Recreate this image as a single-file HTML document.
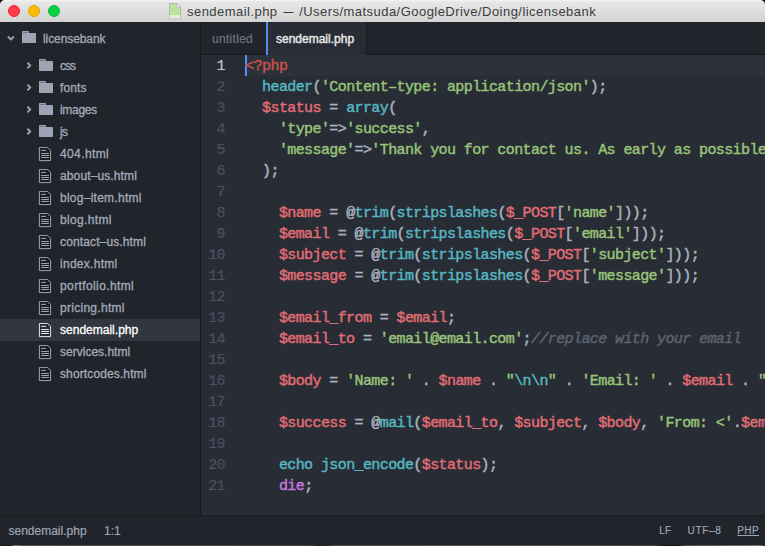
<!DOCTYPE html>
<html>
<head>
<meta charset="utf-8">
<title>sendemail.php</title>
<style>
*{box-sizing:border-box;margin:0;padding:0}
html,body{width:765px;height:546px;overflow:hidden;background:#282c34}
body{font-family:"Liberation Sans",sans-serif;position:relative}
#win{position:absolute;left:0;top:0;width:765px;height:546px;overflow:hidden;background:#282c34}
/* title bar */
#title{position:absolute;left:0;top:0;width:765px;height:22px;background:linear-gradient(#f5f5f5 0,#e7e7e7 2px,#d3d3d3 100%)}
#title .dot{position:absolute;top:5px;width:12px;height:12px;border-radius:50%}
#d1{left:8px;background:#fc3d49;border:1px solid #ee2430}
#d2{left:28px;background:#fdbc08;border:1px solid #e0a20a}
#d3{left:48px;background:#05d145;border:1px solid #0ab83b}
#ttext{position:absolute;left:187px;top:3.500px;font-size:13px;line-height:16px;color:#3c3c3c;white-space:nowrap;letter-spacing:.46px}
#corner,#corner2{position:absolute;top:0;width:4px;height:4px}
#corner{left:0;background:radial-gradient(circle at 4px 4px,rgba(0,0,0,0) 3.300px,#000 4.300px)}
#corner2{right:0;background:radial-gradient(circle at 0 4px,rgba(0,0,0,0) 3.300px,#000 4.300px)}
#ficon{position:absolute;left:169px;top:2.700px}
/* sidebar */
#side{position:absolute;left:0;top:22px;width:201px;height:494px;background:#21252b;border-right:1px solid #181a1f}
.row{position:absolute;left:0;width:200px;height:22px;font-size:12px;line-height:22px;color:#a3abba;white-space:nowrap;-webkit-text-stroke:.3px}
.row span{position:absolute;top:0}
.row svg{position:absolute}
.sel{background:#31363f;color:#fff}
/* tabs */
#tabs{position:absolute;left:201px;top:22px;width:564px;height:33px;background:#21252b;border-bottom:1px solid #181a1f}
.tab{position:absolute;top:0;height:33px;font-size:12px;line-height:35px;color:#6e7482;-webkit-text-stroke:.2px;white-space:nowrap}
#t1{left:0;width:65px;padding-left:11px;letter-spacing:.3px}
#t2{left:65px;width:101px;background:#282c34;color:#e6e6e6;border-left:2px solid #568af2;border-right:1px solid #181a1f;padding-left:8px;height:33px;-webkit-text-stroke:.45px}
/* editor */
#ed{position:absolute;left:201px;top:55px;width:564px;height:461px;background:#282c34;font-family:"Liberation Mono",monospace;font-size:15px;letter-spacing:-.6px;-webkit-text-stroke:.45px}
#hl{position:absolute;left:44px;top:0;width:520px;height:21px;background:#2c313a}
#cur{position:absolute;left:44px;top:0;width:2px;height:21px;background:#528bff}
.ln{position:absolute;left:0;width:24px;text-align:right;height:21px;line-height:23px;color:#4b5263;white-space:pre}
.ln{-webkit-text-stroke:.15px}
.ln1{color:#c8ccd4}
.l{position:absolute;left:44.300px;height:21px;line-height:23px;color:#abb2bf;white-space:pre}
.d{color:#c8524b}.r{color:#e06c75}.g{color:#98c379}.c{color:#56b6c2}.b{color:#61afef}.p{color:#c678dd}.m{color:#5c6370;font-style:italic}.w{color:#abb2bf}
/* status */
#status{position:absolute;left:0;top:515px;width:765px;height:31px;background:#21252b;border-top:1px solid #181a1f;font-size:12px;line-height:30px;color:#9da5b4;-webkit-text-stroke:.2px}
#status span{position:absolute;top:0;white-space:nowrap}
#status .sm{font-size:10px;top:-.5px}
#bstrip{position:absolute;left:0;top:545px;width:765px;height:1px;background:linear-gradient(90deg,#16181c 0,#16181c 12px,#857f6e 13px,#857f6e 19px,#55565a 21px,#48494c 310px,#222 318px,#222 326px,#505154 334px,#58585a 520px,#4a4a4c 655px,#111 662px,#111 678px,#5a5a5c 686px,#77777a 750px,#8a8a8c 760px,#222 765px);opacity:.85}
</style>
</head>
<body>
<div id="win">
<div id="title">
  <div id="corner"></div><div id="corner2"></div>
  <div class="dot" id="d1"></div><div class="dot" id="d2"></div><div class="dot" id="d3"></div>
  <svg id="ficon" width="12" height="16" viewBox="0 0 12 16"><path d="M.4 .4h7.400l3.800 3.800v11.400h-11.200z" fill="#bbe39e" stroke="#8f9a8a" stroke-width=".6"/><path d="M.7 12.400h10.600v2.900h-10.600z" fill="#f7f7f7"/><path d="M.7 13.700h10.600" stroke="#c9c9c9" stroke-width=".5"/><path d="M7.800 .4v3.800h3.800z" fill="#fafafa" stroke="#a5a5a5" stroke-width=".5"/></svg>
  <div id="ttext">sendemail.php <span style="display:inline-block;transform:scaleX(.76)">—</span> /Users/matsuda/GoogleDrive/Doing/licensebank</div>
</div>

<div id="side">
<div class="row" style="top:6px"><svg style="left:6px;top:7px" width="10" height="7" viewBox="0 0 10 7"><path d="M1.900 1.500l3 3l3-3" fill="none" stroke="#9da5b4" stroke-width="1.900"/></svg><svg style="left:22px;top:3px" width="14" height="12" viewBox="0 0 14 12"><path d="M0 .800q0-.800 .800-.800h5.400q.800 0 .800 .800v1.300h6.200q.800 0 .800 .800v8.300q0 .800-.800 .800h-12.400q-.800 0-.800-.800z" fill="#9da5b4"/><rect x=".900" y="1.200" width="5.200" height=".800" fill="#666c79"/></svg><span style="left:43px;letter-spacing:-0.09px">licensebank</span></div>
<div class="row" style="top:33px"><svg style="left:26px;top:6px" width="7" height="9" viewBox="0 0 7 9"><path d="M1.400 1.700l2.800 2.800l-2.800 2.800" fill="none" stroke="#9da5b4" stroke-width="1.900"/></svg><svg style="left:39px;top:4px" width="14" height="12" viewBox="0 0 14 12"><path d="M0 .800q0-.800 .800-.800h5.400q.800 0 .800 .800v1.300h6.200q.800 0 .800 .800v8.300q0 .800-.800 .800h-12.400q-.800 0-.800-.800z" fill="#9da5b4"/><rect x=".900" y="1.200" width="5.200" height=".800" fill="#666c79"/></svg><span style="left:60px;letter-spacing:-0.95px">css</span></div>
<div class="row" style="top:55px"><svg style="left:26px;top:6px" width="7" height="9" viewBox="0 0 7 9"><path d="M1.400 1.700l2.800 2.800l-2.800 2.800" fill="none" stroke="#9da5b4" stroke-width="1.900"/></svg><svg style="left:39px;top:4px" width="14" height="12" viewBox="0 0 14 12"><path d="M0 .800q0-.800 .800-.800h5.400q.800 0 .800 .800v1.300h6.200q.800 0 .800 .800v8.300q0 .800-.800 .800h-12.400q-.800 0-.800-.800z" fill="#9da5b4"/><rect x=".900" y="1.200" width="5.200" height=".800" fill="#666c79"/></svg><span style="left:60px;letter-spacing:0.12px">fonts</span></div>
<div class="row" style="top:77px"><svg style="left:26px;top:6px" width="7" height="9" viewBox="0 0 7 9"><path d="M1.400 1.700l2.800 2.800l-2.800 2.800" fill="none" stroke="#9da5b4" stroke-width="1.900"/></svg><svg style="left:39px;top:4px" width="14" height="12" viewBox="0 0 14 12"><path d="M0 .800q0-.800 .800-.800h5.400q.800 0 .800 .800v1.300h6.200q.800 0 .800 .800v8.300q0 .800-.800 .800h-12.400q-.800 0-.800-.800z" fill="#9da5b4"/><rect x=".900" y="1.200" width="5.200" height=".800" fill="#666c79"/></svg><span style="left:60px;letter-spacing:-0.32px">images</span></div>
<div class="row" style="top:99px"><svg style="left:26px;top:6px" width="7" height="9" viewBox="0 0 7 9"><path d="M1.400 1.700l2.800 2.800l-2.800 2.800" fill="none" stroke="#9da5b4" stroke-width="1.900"/></svg><svg style="left:39px;top:4px" width="14" height="12" viewBox="0 0 14 12"><path d="M0 .800q0-.800 .800-.800h5.400q.800 0 .800 .800v1.300h6.200q.800 0 .800 .800v8.300q0 .800-.800 .800h-12.400q-.800 0-.800-.800z" fill="#9da5b4"/><rect x=".900" y="1.200" width="5.200" height=".800" fill="#666c79"/></svg><span style="left:60px;letter-spacing:-0.57px">js</span></div>
<div class="row" style="top:121px"><svg style="left:38px;top:4px" width="14" height="15" viewBox="0 0 14 15"><path d="M1.400 .4h8.200l3 3v10.200h-11.200z" fill="rgba(0,0,0,.13)" stroke="#9da5b4" stroke-width="1"/><path d="M3.200 3.400h4.700M3.200 6.500h7.700M3.200 8.500h7.700M3.200 10.500h7.700" stroke="#9da5b4" stroke-width="1"/></svg><span style="left:60px;letter-spacing:0.38px">404.html</span></div>
<div class="row" style="top:143px"><svg style="left:38px;top:4px" width="14" height="15" viewBox="0 0 14 15"><path d="M1.400 .4h8.200l3 3v10.200h-11.200z" fill="rgba(0,0,0,.13)" stroke="#9da5b4" stroke-width="1"/><path d="M3.200 3.400h4.700M3.200 6.500h7.700M3.200 8.500h7.700M3.200 10.500h7.700" stroke="#9da5b4" stroke-width="1"/></svg><span style="left:60px;letter-spacing:0.12px">about–us.html</span></div>
<div class="row" style="top:165px"><svg style="left:38px;top:4px" width="14" height="15" viewBox="0 0 14 15"><path d="M1.400 .4h8.200l3 3v10.200h-11.200z" fill="rgba(0,0,0,.13)" stroke="#9da5b4" stroke-width="1"/><path d="M3.200 3.400h4.700M3.200 6.500h7.700M3.200 8.500h7.700M3.200 10.500h7.700" stroke="#9da5b4" stroke-width="1"/></svg><span style="left:60px;letter-spacing:0.26px">blog–item.html</span></div>
<div class="row" style="top:187px"><svg style="left:38px;top:4px" width="14" height="15" viewBox="0 0 14 15"><path d="M1.400 .4h8.200l3 3v10.200h-11.200z" fill="rgba(0,0,0,.13)" stroke="#9da5b4" stroke-width="1"/><path d="M3.200 3.400h4.700M3.200 6.500h7.700M3.200 8.500h7.700M3.200 10.500h7.700" stroke="#9da5b4" stroke-width="1"/></svg><span style="left:60px;letter-spacing:0.34px">blog.html</span></div>
<div class="row" style="top:209px"><svg style="left:38px;top:4px" width="14" height="15" viewBox="0 0 14 15"><path d="M1.400 .4h8.200l3 3v10.200h-11.200z" fill="rgba(0,0,0,.13)" stroke="#9da5b4" stroke-width="1"/><path d="M3.200 3.400h4.700M3.200 6.500h7.700M3.200 8.500h7.700M3.200 10.500h7.700" stroke="#9da5b4" stroke-width="1"/></svg><span style="left:60px;letter-spacing:0.13px">contact–us.html</span></div>
<div class="row" style="top:231px"><svg style="left:38px;top:4px" width="14" height="15" viewBox="0 0 14 15"><path d="M1.400 .4h8.200l3 3v10.200h-11.200z" fill="rgba(0,0,0,.13)" stroke="#9da5b4" stroke-width="1"/><path d="M3.200 3.400h4.700M3.200 6.500h7.700M3.200 8.500h7.700M3.200 10.500h7.700" stroke="#9da5b4" stroke-width="1"/></svg><span style="left:60px;letter-spacing:0.28px">index.html</span></div>
<div class="row" style="top:253px"><svg style="left:38px;top:4px" width="14" height="15" viewBox="0 0 14 15"><path d="M1.400 .4h8.200l3 3v10.200h-11.200z" fill="rgba(0,0,0,.13)" stroke="#9da5b4" stroke-width="1"/><path d="M3.200 3.400h4.700M3.200 6.500h7.700M3.200 8.500h7.700M3.200 10.500h7.700" stroke="#9da5b4" stroke-width="1"/></svg><span style="left:60px;letter-spacing:0.39px">portfolio.html</span></div>
<div class="row" style="top:275px"><svg style="left:38px;top:4px" width="14" height="15" viewBox="0 0 14 15"><path d="M1.400 .4h8.200l3 3v10.200h-11.200z" fill="rgba(0,0,0,.13)" stroke="#9da5b4" stroke-width="1"/><path d="M3.200 3.400h4.700M3.200 6.500h7.700M3.200 8.500h7.700M3.200 10.500h7.700" stroke="#9da5b4" stroke-width="1"/></svg><span style="left:60px;letter-spacing:0.28px">pricing.html</span></div>
<div class="row sel" style="top:297px"><svg style="left:38px;top:4px" width="14" height="15" viewBox="0 0 14 15"><path d="M1.400 .4h8.200l3 3v10.200h-11.200z" fill="rgba(0,0,0,.13)" stroke="#e6e8ec" stroke-width="1"/><path d="M3.200 3.400h4.700M3.200 6.500h7.700M3.200 8.500h7.700M3.200 10.500h7.700" stroke="#e6e8ec" stroke-width="1"/></svg><span style="left:60px;letter-spacing:0.01px">sendemail.php</span></div>
<div class="row" style="top:319px"><svg style="left:38px;top:4px" width="14" height="15" viewBox="0 0 14 15"><path d="M1.400 .4h8.200l3 3v10.200h-11.200z" fill="rgba(0,0,0,.13)" stroke="#9da5b4" stroke-width="1"/><path d="M3.200 3.400h4.700M3.200 6.500h7.700M3.200 8.500h7.700M3.200 10.500h7.700" stroke="#9da5b4" stroke-width="1"/></svg><span style="left:60px;letter-spacing:0.01px">services.html</span></div>
<div class="row" style="top:341px"><svg style="left:38px;top:4px" width="14" height="15" viewBox="0 0 14 15"><path d="M1.400 .4h8.200l3 3v10.200h-11.200z" fill="rgba(0,0,0,.13)" stroke="#9da5b4" stroke-width="1"/><path d="M3.200 3.400h4.700M3.200 6.500h7.700M3.200 8.500h7.700M3.200 10.500h7.700" stroke="#9da5b4" stroke-width="1"/></svg><span style="left:60px;letter-spacing:0.12px">shortcodes.html</span></div>
</div>

<div id="tabs">
  <div class="tab" id="t1">untitled</div>
  <div class="tab" id="t2">sendemail.php</div>
</div>

<div id="ed">
  <div id="hl"></div>
  <div id="cur"></div>
<div class="ln ln1" style="top:0px">1</div><div class="l" style="top:0px"><span class="d">&lt;?php</span></div>
<div class="ln" style="top:21px">2</div><div class="l" style="top:21px">  <span class="c">header</span>(<span class="g">'Content–type: application/json'</span>);</div>
<div class="ln" style="top:42px">3</div><div class="l" style="top:42px">  <span class="r">$status</span> = <span class="c">array</span>(</div>
<div class="ln" style="top:63px">4</div><div class="l" style="top:63px">    <span class="g">'type'</span>=&gt;<span class="g">'success'</span>,</div>
<div class="ln" style="top:84px">5</div><div class="l" style="top:84px">    <span class="g">'message'</span>=&gt;<span class="g">'Thank you for contact us. As early as possible  we will contact you'</span></div>
<div class="ln" style="top:105px">6</div><div class="l" style="top:105px">  );</div>
<div class="ln" style="top:126px">7</div><div class="l" style="top:126px"></div>
<div class="ln" style="top:147px">8</div><div class="l" style="top:147px">    <span class="r">$name</span> = @<span class="c">trim</span>(<span class="c">stripslashes</span>(<span class="r">$_POST</span>[<span class="g">'name'</span>]));</div>
<div class="ln" style="top:168px">9</div><div class="l" style="top:168px">    <span class="r">$email</span> = @<span class="c">trim</span>(<span class="c">stripslashes</span>(<span class="r">$_POST</span>[<span class="g">'email'</span>]));</div>
<div class="ln" style="top:189px">10</div><div class="l" style="top:189px">    <span class="r">$subject</span> = @<span class="c">trim</span>(<span class="c">stripslashes</span>(<span class="r">$_POST</span>[<span class="g">'subject'</span>]));</div>
<div class="ln" style="top:210px">11</div><div class="l" style="top:210px">    <span class="r">$message</span> = @<span class="c">trim</span>(<span class="c">stripslashes</span>(<span class="r">$_POST</span>[<span class="g">'message'</span>]));</div>
<div class="ln" style="top:231px">12</div><div class="l" style="top:231px"></div>
<div class="ln" style="top:252px">13</div><div class="l" style="top:252px">    <span class="r">$email_from</span> = <span class="r">$email</span>;</div>
<div class="ln" style="top:273px">14</div><div class="l" style="top:273px">    <span class="r">$email_to</span> = <span class="g">'email@email.com'</span>;<span class="m">//replace with your email</span></div>
<div class="ln" style="top:294px">15</div><div class="l" style="top:294px"></div>
<div class="ln" style="top:315px">16</div><div class="l" style="top:315px">    <span class="r">$body</span> = <span class="g">'Name: '</span> . <span class="r">$name</span> . <span class="g">"</span><span class="c">\n\n</span><span class="g">"</span> . <span class="g">'Email: '</span> . <span class="r">$email</span> . <span class="g">"</span><span class="c">\n\n</span><span class="g">"</span> . <span class="g">'Subject: '</span></div>
<div class="ln" style="top:336px">17</div><div class="l" style="top:336px"></div>
<div class="ln" style="top:357px">18</div><div class="l" style="top:357px">    <span class="r">$success</span> = @<span class="c">mail</span>(<span class="r">$email_to</span>, <span class="r">$subject</span>, <span class="r">$body</span>, <span class="g">'From: &lt;'</span>.<span class="r">$email_from</span>.<span class="g">'&gt;'</span>);</div>
<div class="ln" style="top:378px">19</div><div class="l" style="top:378px"></div>
<div class="ln" style="top:399px">20</div><div class="l" style="top:399px">    <span class="c">echo</span> <span class="c">json_encode</span>(<span class="r">$status</span>);</div>
<div class="ln" style="top:420px">21</div><div class="l" style="top:420px">    <span class="p">die</span>;</div>
</div>

<div id="status">
  <span style="left:8.500px">sendemail.php</span>
  <span style="left:104px">1:1</span>
  <span class="sm" style="left:659.300px;letter-spacing:.1px">LF</span>
  <span class="sm" style="left:687.500px;letter-spacing:.7px">UTF–8</span>
  <span class="sm" style="left:737.300px;letter-spacing:.4px;text-decoration:underline">PHP</span>
</div>
<div id="bstrip"></div>
</div>
</body>
</html>
